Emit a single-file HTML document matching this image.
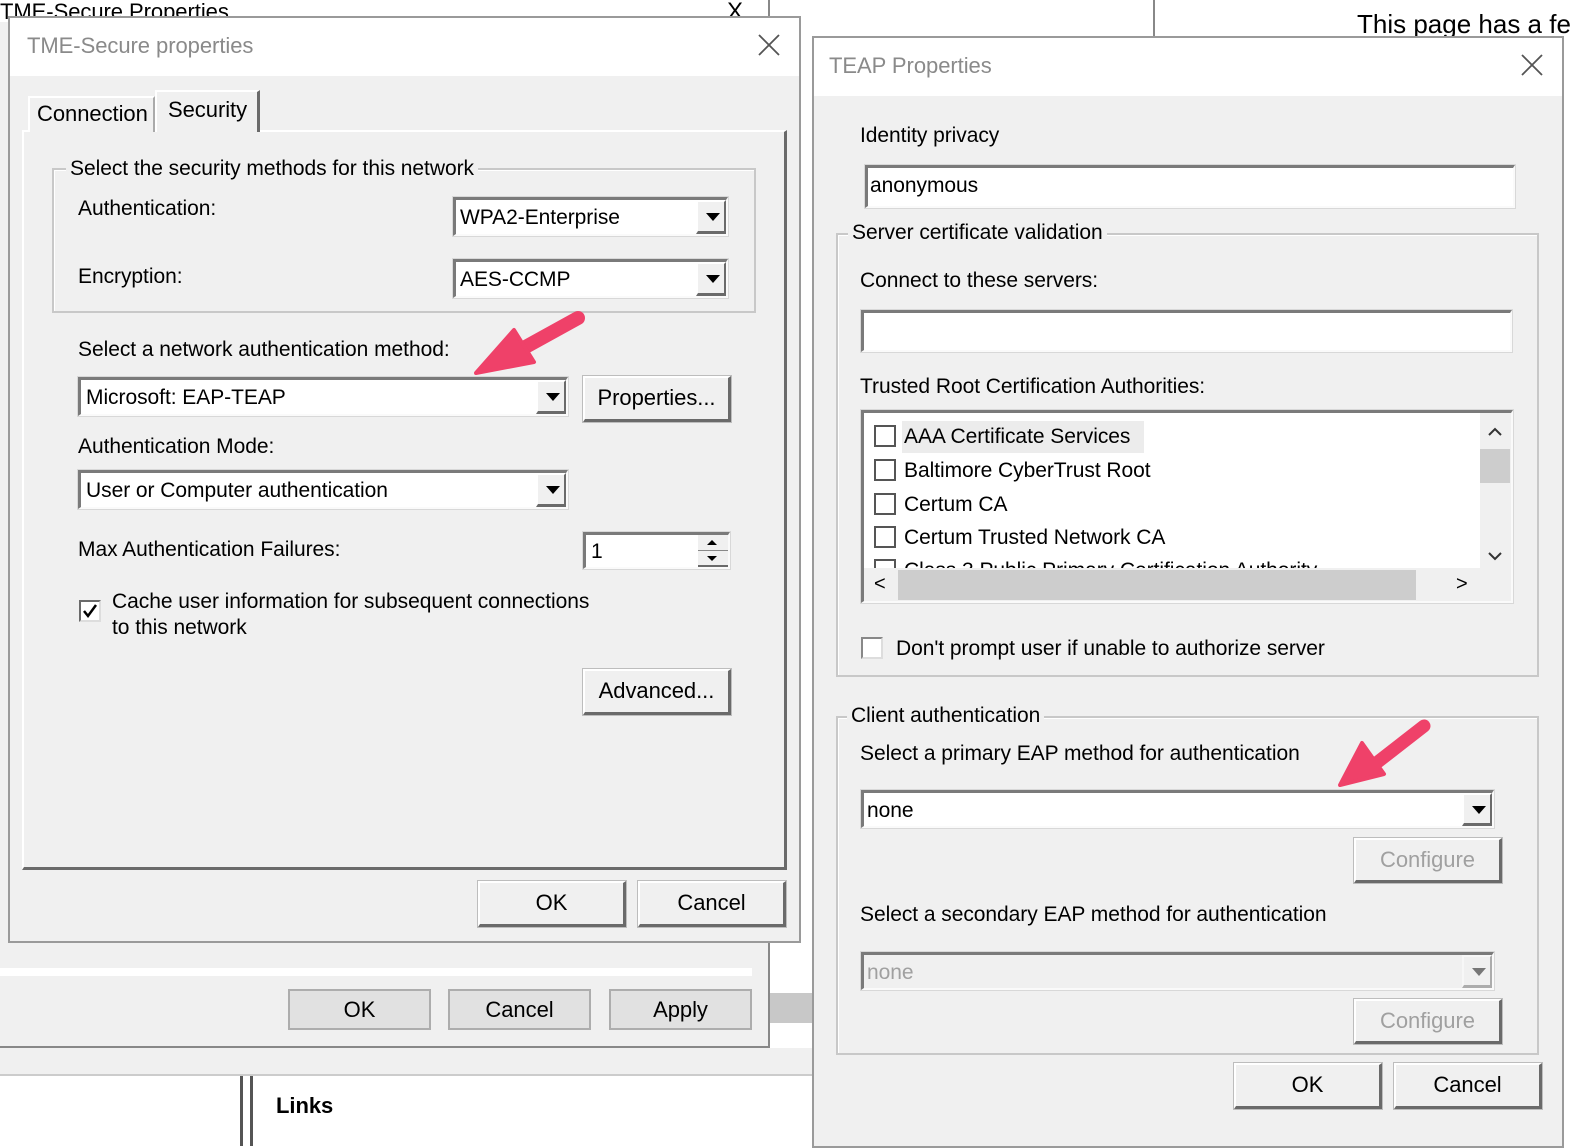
<!DOCTYPE html>
<html><head><meta charset="utf-8"><style>
*{box-sizing:border-box;margin:0;padding:0}
body{width:1582px;height:1146px;position:relative;overflow:hidden;background:#fff;font-family:"Liberation Sans",Arial,sans-serif;font-size:21px;color:#000;letter-spacing:-0.05px}
.a{position:absolute}
.t{position:absolute;white-space:nowrap;line-height:24px}
.sunk{position:absolute;background:#fff;border-top:3px solid #7a7a7a;border-left:3px solid #7a7a7a;border-bottom:2px solid #fafafa;border-right:2px solid #fafafa;box-shadow:0 0 0 1px #d8d8d8}
.btn{position:absolute;background:#f0f0f0;border-top:2px solid #fff;border-left:2px solid #fff;border-bottom:3px solid #6a6a6a;border-right:3px solid #6a6a6a;box-shadow:0 0 0 1px #bdbdbd;text-align:center;font-size:22px}
.btn2{position:absolute;background:#e1e1e1;border:2px solid #adadad;text-align:center;font-size:22px}
.dd{position:absolute;top:0;right:0;width:30px;bottom:0;background:#f0f0f0;border-top:2px solid #fff;border-left:2px solid #fff;border-bottom:3px solid #6a6a6a;border-right:2px solid #6a6a6a}
.dd:after{content:"";position:absolute;left:8px;top:11px;border-left:7px solid transparent;border-right:7px solid transparent;border-top:8px solid #000}
.grp{position:absolute;border:2px solid #c8c8c8;box-shadow:inset 1px 1px 0 #fff}
.leg{position:absolute;background:#f0f0f0;padding:0 4px;line-height:24px;white-space:nowrap}
.cb{position:absolute;width:22px;height:22px;background:#fff;border-top:2px solid #6a6a6a;border-left:2px solid #6a6a6a;border-bottom:2px solid #ddd;border-right:2px solid #ddd}
.dis{color:#a0a0a0}
</style></head><body>

<div class="a" style="left:1153px;top:0;width:2px;height:36px;background:#888"></div>
<div class="t" style="left:1357px;top:12px;font-size:26px;letter-spacing:0">This page has a fe</div>
<div class="a" style="left:0;top:0;width:770px;height:1048px;background:#f0f0f0;border-right:2px solid #888;border-bottom:2px solid #888"></div>
<div class="a" style="left:0;top:0;width:768px;height:22px;background:#fff"></div>
<div class="t" style="left:0;top:0;font-size:22px">TME-Secure Properties</div>
<div class="t" style="left:727px;top:0;font-size:24px">X</div>
<div class="a" style="left:0;top:968px;width:752px;height:8px;background:#fff"></div>
<div class="btn2" style="left:288px;top:989px;width:143px;height:41px;line-height:37px">OK</div>
<div class="btn2" style="left:448px;top:989px;width:143px;height:41px;line-height:37px">Cancel</div>
<div class="btn2" style="left:609px;top:989px;width:143px;height:41px;line-height:37px">Apply</div>
<div class="a" style="left:770px;top:993px;width:42px;height:30px;background:#c8c8c8"></div>
<div class="a" style="left:0;top:1048px;width:812px;height:28px;background:#f0f0f0;border-bottom:2px solid #ccc"></div>
<div class="a" style="left:240px;top:1076px;width:3px;height:70px;background:#555"></div>
<div class="a" style="left:250px;top:1076px;width:3px;height:70px;background:#555"></div>
<div class="t" style="left:276px;top:1094px;font-weight:bold;font-size:22px">Links</div>
<div class="a" style="left:1562px;top:96px;width:20px;height:1050px;background:#fff"></div>

<div class="a" style="left:8px;top:16px;width:793px;height:927px;background:#f0f0f0;border:2px solid #9a9a9a"></div>
<div class="a" style="left:10px;top:18px;width:789px;height:58px;background:#fff"></div>
<div class="t" style="left:27px;top:34px;color:#8a8a8a;font-size:22px">TME-Secure properties</div>
<svg class="a" style="left:758px;top:34px" width="22" height="22"><path d="M1 1L21 21M21 1L1 21" stroke="#555" stroke-width="1.8"/></svg>
<div class="a" style="left:22px;top:130px;width:765px;height:740px;border:2px solid #fff;border-right:3px solid #6a6a6a;border-bottom:3px solid #6a6a6a"></div>
<div class="a" style="left:28px;top:96px;width:127px;height:36px;border-top:2px solid #fff;border-left:2px solid #fff;border-right:2px solid #aaa;background:#f0f0f0"></div>
<div class="t" style="left:37px;top:102px;font-size:22px">Connection</div>
<div class="a" style="left:155px;top:90px;width:105px;height:42px;border-top:2px solid #fff;border-left:2px solid #fff;border-right:3px solid #6a6a6a;background:#f0f0f0"></div>
<div class="t" style="left:168px;top:98px;font-size:22px">Security</div>

<div class="grp" style="left:52px;top:168px;width:704px;height:145px"></div>
<div class="leg" style="left:66px;top:157px">Select the security methods for this network</div>
<div class="t" style="left:78px;top:197px">Authentication:</div>
<div class="sunk" style="left:453px;top:197px;width:275px;height:39px"><div class="t" style="left:4px;top:6px">WPA2-Enterprise</div><div class="dd"></div></div>
<div class="t" style="left:78px;top:265px">Encryption:</div>
<div class="sunk" style="left:453px;top:259px;width:275px;height:39px"><div class="t" style="left:4px;top:6px">AES-CCMP</div><div class="dd"></div></div>

<div class="t" style="left:78px;top:338px">Select a network authentication method:</div>
<div class="sunk" style="left:78px;top:377px;width:490px;height:39px"><div class="t" style="left:5px;top:6px">Microsoft: EAP-TEAP</div><div class="dd"></div></div>
<div class="btn" style="left:583px;top:376px;width:148px;height:46px;line-height:40px">Properties...</div>
<div class="t" style="left:78px;top:435px">Authentication Mode:</div>
<div class="sunk" style="left:78px;top:470px;width:490px;height:39px"><div class="t" style="left:5px;top:6px">User or Computer authentication</div><div class="dd"></div></div>
<div class="t" style="left:78px;top:538px">Max Authentication Failures:</div>
<div class="sunk" style="left:583px;top:532px;width:147px;height:37px"><div class="t" style="left:5px;top:5px">1</div>
<div class="a" style="right:0;top:0;width:30px;height:16px;background:#f0f0f0;border-bottom:1px solid #888"><div class="a" style="left:9px;top:5px;border-left:5px solid transparent;border-right:5px solid transparent;border-bottom:5px solid #000"></div></div>
<div class="a" style="right:0;top:16px;width:30px;height:16px;background:#f0f0f0;border-bottom:2px solid #6a6a6a"><div class="a" style="left:9px;top:5px;border-left:5px solid transparent;border-right:5px solid transparent;border-top:5px solid #000"></div></div></div>
<div class="cb" style="left:79px;top:600px"><svg class="a" style="left:1px;top:1px" width="16" height="16"><path d="M2 8L6 13L14 2" stroke="#000" stroke-width="2.5" fill="none"/></svg></div>
<div class="t" style="left:112px;top:590px">Cache user information for subsequent connections</div>
<div class="t" style="left:112px;top:616px">to this network</div>
<div class="btn" style="left:583px;top:669px;width:148px;height:46px;line-height:40px">Advanced...</div>
<div class="btn" style="left:478px;top:881px;width:148px;height:46px;line-height:40px">OK</div>
<div class="btn" style="left:638px;top:881px;width:148px;height:46px;line-height:40px">Cancel</div>

<div class="a" style="left:812px;top:36px;width:752px;height:1112px;background:#f0f0f0;border:2px solid #9a9a9a"></div>
<div class="a" style="left:814px;top:38px;width:748px;height:58px;background:#fff"></div>
<div class="t" style="left:829px;top:54px;color:#8a8a8a;font-size:22px">TEAP Properties</div>
<svg class="a" style="left:1521px;top:54px" width="22" height="22"><path d="M1 1L21 21M21 1L1 21" stroke="#555" stroke-width="1.8"/></svg>
<div class="t" style="left:860px;top:124px">Identity privacy</div>
<div class="sunk" style="left:865px;top:165px;width:650px;height:43px"><div class="t" style="left:2px;top:6px">anonymous</div></div>
<div class="grp" style="left:836px;top:233px;width:703px;height:444px"></div>
<div class="leg" style="left:848px;top:221px">Server certificate validation</div>
<div class="t" style="left:860px;top:269px">Connect to these servers:</div>
<div class="sunk" style="left:861px;top:310px;width:651px;height:42px"></div>
<div class="t" style="left:860px;top:375px">Trusted Root Certification Authorities:</div>
<div class="sunk" style="left:861px;top:410px;width:652px;height:193px;overflow:hidden">
 <div class="a" style="left:38px;top:8px;width:242px;height:32px;background:#ececec"></div>
 <div class="cb" style="left:10px;top:12px;border-color:#555"></div><div class="t" style="left:40px;top:12px">AAA Certificate Services</div>
 <div class="cb" style="left:10px;top:46px;border-color:#555"></div><div class="t" style="left:40px;top:46px">Baltimore CyberTrust Root</div>
 <div class="cb" style="left:10px;top:80px;border-color:#555"></div><div class="t" style="left:40px;top:80px">Certum CA</div>
 <div class="cb" style="left:10px;top:113px;border-color:#555"></div><div class="t" style="left:40px;top:113px">Certum Trusted Network CA</div>
 <div class="cb" style="left:10px;top:146px;border-color:#555"></div><div class="t" style="left:40px;top:146px">Class 3 Public Primary Certification Authority</div>
 <div class="a" style="left:0;top:155px;width:652px;height:40px;background:#f0f0f0"></div>
 <div class="a" style="left:34px;top:157px;width:518px;height:30px;background:#cdcdcd"></div>
 <div class="t" style="left:10px;top:159px;font-size:20px">&lt;</div><div class="t" style="left:592px;top:159px;font-size:20px">&gt;</div>
 <div class="a" style="left:616px;top:0;width:34px;height:155px;background:#f0f0f0"></div>
 <div class="a" style="left:616px;top:36px;width:30px;height:34px;background:#cdcdcd"></div>
 <svg class="a" style="left:622px;top:12px" width="18" height="140"><path d="M3 10L9 4L15 10M3 128L9 134L15 128" stroke="#333" stroke-width="2" fill="none"/></svg>
</div>
<div class="cb" style="left:861px;top:637px;background:#fff;border-color:#888 #ddd #ddd #888"></div>
<div class="t" style="left:896px;top:637px">Don't prompt user if unable to authorize server</div>

<div class="grp" style="left:836px;top:716px;width:703px;height:339px"></div>
<div class="leg" style="left:847px;top:704px">Client authentication</div>
<div class="t" style="left:860px;top:742px">Select a primary EAP method for authentication</div>
<div class="sunk" style="left:861px;top:790px;width:633px;height:38px"><div class="t" style="left:3px;top:6px">none</div><div class="dd"></div></div>
<div class="btn dis" style="left:1354px;top:838px;width:148px;height:45px;line-height:39px">Configure</div>
<div class="t" style="left:860px;top:903px">Select a secondary EAP method for authentication</div>
<div class="sunk" style="left:861px;top:952px;width:633px;height:38px;background:#f0f0f0"><div class="t dis" style="left:3px;top:6px">none</div><div class="dd" style="opacity:.5"></div></div>
<div class="btn dis" style="left:1354px;top:999px;width:148px;height:45px;line-height:39px">Configure</div>
<div class="btn" style="left:1234px;top:1063px;width:148px;height:46px;line-height:40px">OK</div>
<div class="btn" style="left:1394px;top:1063px;width:148px;height:46px;line-height:40px">Cancel</div>

<svg class="a" style="left:0;top:0" width="1582" height="1146">
 <g fill="#ef4169" stroke="#ef4169" stroke-linejoin="round">
  <path d="M578 318L520 350" stroke-width="14" stroke-linecap="round"/>
  <path d="M476 373L514 330L534 362Z" stroke-width="4"/>
  <path d="M1424 726L1370 768" stroke-width="13" stroke-linecap="round"/>
  <path d="M1340 785L1362 743L1384 774Z" stroke-width="4"/>
 </g>
</svg>
</body></html>
